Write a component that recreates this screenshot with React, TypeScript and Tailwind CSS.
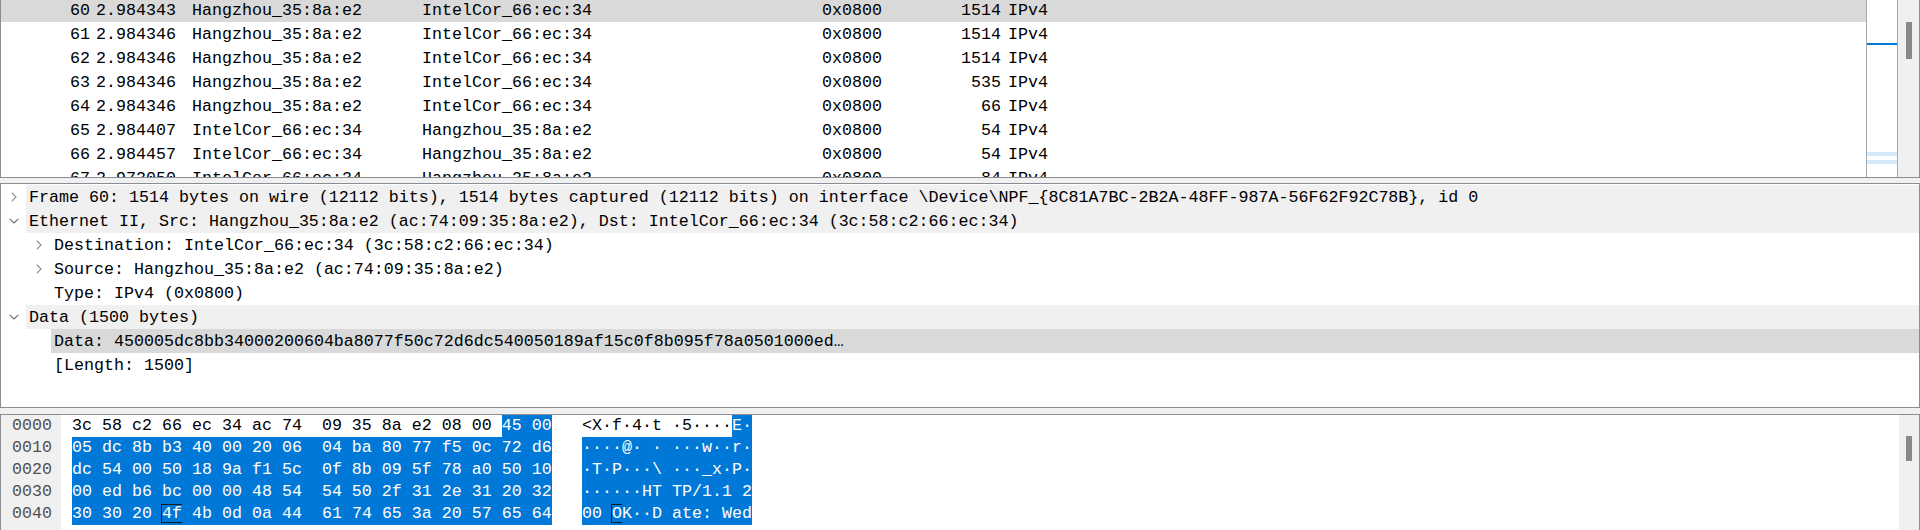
import React from "react";

type Packet = { no: string; time: string; src: string; dst: string; len: string };

const HZ = "Hangzhou_35:8a:e2";
const IC = "IntelCor_66:ec:34";

const packets: Packet[] = [
  { no: "60", time: "2.984343", src: HZ, dst: IC, len: "1514" },
  { no: "61", time: "2.984346", src: HZ, dst: IC, len: "1514" },
  { no: "62", time: "2.984346", src: HZ, dst: IC, len: "1514" },
  { no: "63", time: "2.984346", src: HZ, dst: IC, len: "535" },
  { no: "64", time: "2.984346", src: HZ, dst: IC, len: "66" },
  { no: "65", time: "2.984407", src: IC, dst: HZ, len: "54" },
  { no: "66", time: "2.984457", src: IC, dst: HZ, len: "54" },
  { no: "67", time: "2.973050", src: IC, dst: HZ, len: "84" },
];

type Detail = { depth: number; chevron?: "right" | "down"; text: string; band?: "light" | "sel" };

const details: Detail[] = [
  {
    depth: 0,
    chevron: "right",
    band: "light",
    text: "Frame 60: 1514 bytes on wire (12112 bits), 1514 bytes captured (12112 bits) on interface \\Device\\NPF_{8C81A7BC-2B2A-48FF-987A-56F62F92C78B}, id 0",
  },
  {
    depth: 0,
    chevron: "down",
    band: "light",
    text: "Ethernet II, Src: Hangzhou_35:8a:e2 (ac:74:09:35:8a:e2), Dst: IntelCor_66:ec:34 (3c:58:c2:66:ec:34)",
  },
  { depth: 1, chevron: "right", text: "Destination: IntelCor_66:ec:34 (3c:58:c2:66:ec:34)" },
  { depth: 1, chevron: "right", text: "Source: Hangzhou_35:8a:e2 (ac:74:09:35:8a:e2)" },
  { depth: 1, text: "Type: IPv4 (0x0800)" },
  { depth: 0, chevron: "down", band: "light", text: "Data (1500 bytes)" },
  {
    depth: 1,
    band: "sel",
    text: "Data: 450005dc8bb34000200604ba8077f50c72d6dc540050189af15c0f8b095f78a0501000ed\u2026",
  },
  { depth: 1, text: "[Length: 1500]" },
];

function Chevron({ dir }: { dir: "right" | "down" }) {
  if (dir === "right") {
    return (
      <svg width="6" height="10" viewBox="0 0 6 10">
        <path d="M0.8 0.6 L5 5 L0.8 9.4" stroke="#8a8a8a" strokeWidth="1.1" fill="none" />
      </svg>
    );
  }
  return (
    <svg width="10" height="6" viewBox="0 0 10 6">
      <path d="M0.6 0.8 L5 5 L9.4 0.8" stroke="#6a6a6a" strokeWidth="1.1" fill="none" />
    </svg>
  );
}

function PacketRow({ p, selected }: { p: Packet; selected?: boolean }) {
  return (
    <div className={`flex h-[24px] items-center whitespace-pre ${selected ? "bg-[#d9d9d9]" : ""}`}>
      <div className="w-[89px] text-right">{p.no}</div>
      <div className="w-[102px] pl-[6px]">{p.time}</div>
      <div className="w-[230px]">{p.src}</div>
      <div className="w-[400px]">{p.dst}</div>
      <div className="w-[100px]">0x0800</div>
      <div className="w-[79px] text-right">{p.len}</div>
      <div className="pl-[7px]">IPv4</div>
    </div>
  );
}

function DetailRow({ d }: { d: Detail }) {
  const bg = d.band === "sel" ? "bg-[#d9d9d9]" : d.band === "light" ? "bg-[#f0f0f0]" : "";
  return (
    <div className={`flex h-[24px] ${d.depth === 1 ? "pl-[25px]" : ""}`}>
      <div className="flex w-[25px] shrink-0 items-center justify-center">
        {d.chevron && <Chevron dir={d.chevron} />}
      </div>
      <div className={`flex flex-1 items-center whitespace-pre pl-[3px] ${bg}`}>{d.text}</div>
    </div>
  );
}

type Seg = { t: string; blue?: boolean; box?: boolean };

const hexRows: { off: string; hex: Seg[]; ascii: Seg[] }[] = [
  {
    off: "0000",
    hex: [{ t: "3c 58 c2 66 ec 34 ac 74  09 35 8a e2 08 00 " }, { t: "45 00", blue: true }],
    ascii: [{ t: "<X\u00b7f\u00b74\u00b7t \u00b75\u00b7\u00b7\u00b7\u00b7" }, { t: "E\u00b7", blue: true }],
  },
  {
    off: "0010",
    hex: [{ t: "05 dc 8b b3 40 00 20 06  04 ba 80 77 f5 0c 72 d6", blue: true }],
    ascii: [{ t: "\u00b7\u00b7\u00b7\u00b7@\u00b7 \u00b7 \u00b7\u00b7\u00b7w\u00b7\u00b7r\u00b7", blue: true }],
  },
  {
    off: "0020",
    hex: [{ t: "dc 54 00 50 18 9a f1 5c  0f 8b 09 5f 78 a0 50 10", blue: true }],
    ascii: [{ t: "\u00b7T\u00b7P\u00b7\u00b7\u00b7\\ \u00b7\u00b7\u00b7_x\u00b7P\u00b7", blue: true }],
  },
  {
    off: "0030",
    hex: [{ t: "00 ed b6 bc 00 00 48 54  54 50 2f 31 2e 31 20 32", blue: true }],
    ascii: [{ t: "\u00b7\u00b7\u00b7\u00b7\u00b7\u00b7HT TP/1.1 2", blue: true }],
  },
  {
    off: "0040",
    hex: [
      { t: "30 30 20 ", blue: true },
      { t: "4f", blue: true, box: true },
      { t: " 4b 0d 0a 44  61 74 65 3a 20 57 65 64", blue: true },
    ],
    ascii: [
      { t: "00 ", blue: true },
      { t: "O", blue: true, box: true },
      { t: "K\u00b7\u00b7D ate: Wed", blue: true },
    ],
  },
];

function Segs({ segs }: { segs: Seg[] }) {
  return (
    <>
      {segs.map((s, i) => (
        <div
          key={i}
          className={`relative h-[22px] whitespace-pre leading-[22px] ${s.blue ? "bg-[#0078d7] text-white" : ""}`}
        >
          {s.t}
          {s.box && <div className="absolute inset-x-[-1px] top-[1px] bottom-[2px] border border-[#1b1b1b]" />}
        </div>
      ))}
    </>
  );
}

export default function App() {
  return (
    <div className="flex h-[530px] w-[1920px] flex-col overflow-hidden bg-[#f0f0f0] font-['Liberation_Mono',monospace] text-[16.67px] text-black">
      {/* Packet list */}
      <div className="flex h-[178px] shrink-0 border-b border-l border-r border-[#8a8e92] bg-white">
        <div className="flex-1 overflow-hidden">
          <div className="-mt-[2px]">
            {packets.map((p, i) => (
              <PacketRow key={p.no} p={p} selected={i === 0} />
            ))}
          </div>
        </div>
        <div className="flex w-[32px] flex-col border-l border-r border-[#a8a8a8]">
          <div className="h-[43px]" />
          <div className="h-[2px] bg-[#0078d7]" />
          <div className="h-[107px]" />
          <div className="h-[4px] bg-[#d6e9f8]" />
          <div className="h-[4px]" />
          <div className="h-[4px] bg-[#d6e9f8]" />
        </div>
        <div className="w-[21px] bg-[#f0f0f0] pl-[8px] pt-[22px]">
          <div className="h-[37px] w-[6px] bg-[#898989]" />
        </div>
      </div>

      {/* Packet details */}
      <div className="mt-[5px] h-[225px] shrink-0 border border-[#8a8e92] bg-white pt-[1px]">
        {details.map((d, i) => (
          <DetailRow key={i} d={d} />
        ))}
      </div>

      {/* Packet bytes */}
      <div className="mt-[6px] flex flex-1 border-l border-r border-t border-[#8a8e92] bg-white">
        <div className="w-[60px] shrink-0 bg-[#f0f0f0] pl-[11px] text-[#505050]">
          {hexRows.map((r) => (
            <div key={r.off} className="h-[22px] leading-[22px]">
              {r.off}
            </div>
          ))}
        </div>
        <div className="flex-1 pl-[11px]">
          {hexRows.map((r) => (
            <div key={r.off} className="flex h-[22px]">
              <div className="flex w-[480px]">
                <Segs segs={r.hex} />
              </div>
              <div className="w-[30px]" />
              <div className="flex">
                <Segs segs={r.ascii} />
              </div>
            </div>
          ))}
        </div>
        <div className="w-[20px] shrink-0 bg-[#f0f0f0] pl-[7px] pt-[21px]">
          <div className="h-[25px] w-[6px] bg-[#898989]" />
        </div>
      </div>
    </div>
  );
}
